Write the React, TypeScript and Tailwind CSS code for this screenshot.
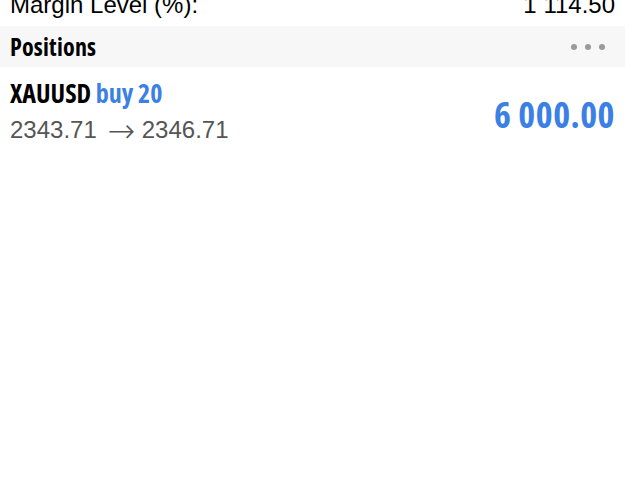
import React from "react";

export default function App() {
  return (
    <div className="w-[625px] h-[484px] bg-white overflow-hidden font-['Liberation_Sans',Arial,sans-serif]">
      <div className="h-[26px] overflow-hidden px-[10px] flex justify-between">
        <span className="text-[24px] leading-[28px] mt-[-9px] text-black">Margin Level (%):</span>
        <span className="text-[24px] leading-[28px] mt-[-9px] text-black">1 114.50</span>
      </div>
      <div className="h-[41px] bg-[#f7f7f7] px-[10px] flex items-center justify-between">
        <span className="text-[24px] font-bold text-black font-['Open_Sans',sans-serif] font-stretch-[75%] tracking-[0.2px]">Positions</span>
        <div className="flex gap-[8px] mr-[10px]">
          <span className="w-[6px] h-[6px] rounded-full bg-[#9a9a9a]" />
          <span className="w-[6px] h-[6px] rounded-full bg-[#9a9a9a]" />
          <span className="w-[6px] h-[6px] rounded-full bg-[#9a9a9a]" />
        </div>
      </div>
      <div className="px-[10px] pt-[12px] flex items-center justify-between">
        <div className="flex flex-col">
          <div className="text-[26px] font-bold leading-[28px] font-['Open_Sans',sans-serif] font-stretch-[75%] tracking-[0px]">
            <span className="text-black">XAUUSD</span> <span className="text-[#3b80e4]">buy 20</span>
          </div>
          <div className="text-[24px] leading-[34px] mt-[6px] text-[#555555] flex items-center whitespace-pre">
            <span>2343.71 </span>
            <span className="font-['DejaVu_Sans',sans-serif] text-[33px] leading-none font-extralight ml-[4px]">→</span>
            <span> 2346.71</span>
          </div>
        </div>
        <div className="text-[36px] font-bold text-[#3b80e4] font-['Open_Sans',sans-serif] font-stretch-[75%] tracking-[0.5px] mt-[4px]">6 000.00</div>
      </div>
    </div>
  );
}
